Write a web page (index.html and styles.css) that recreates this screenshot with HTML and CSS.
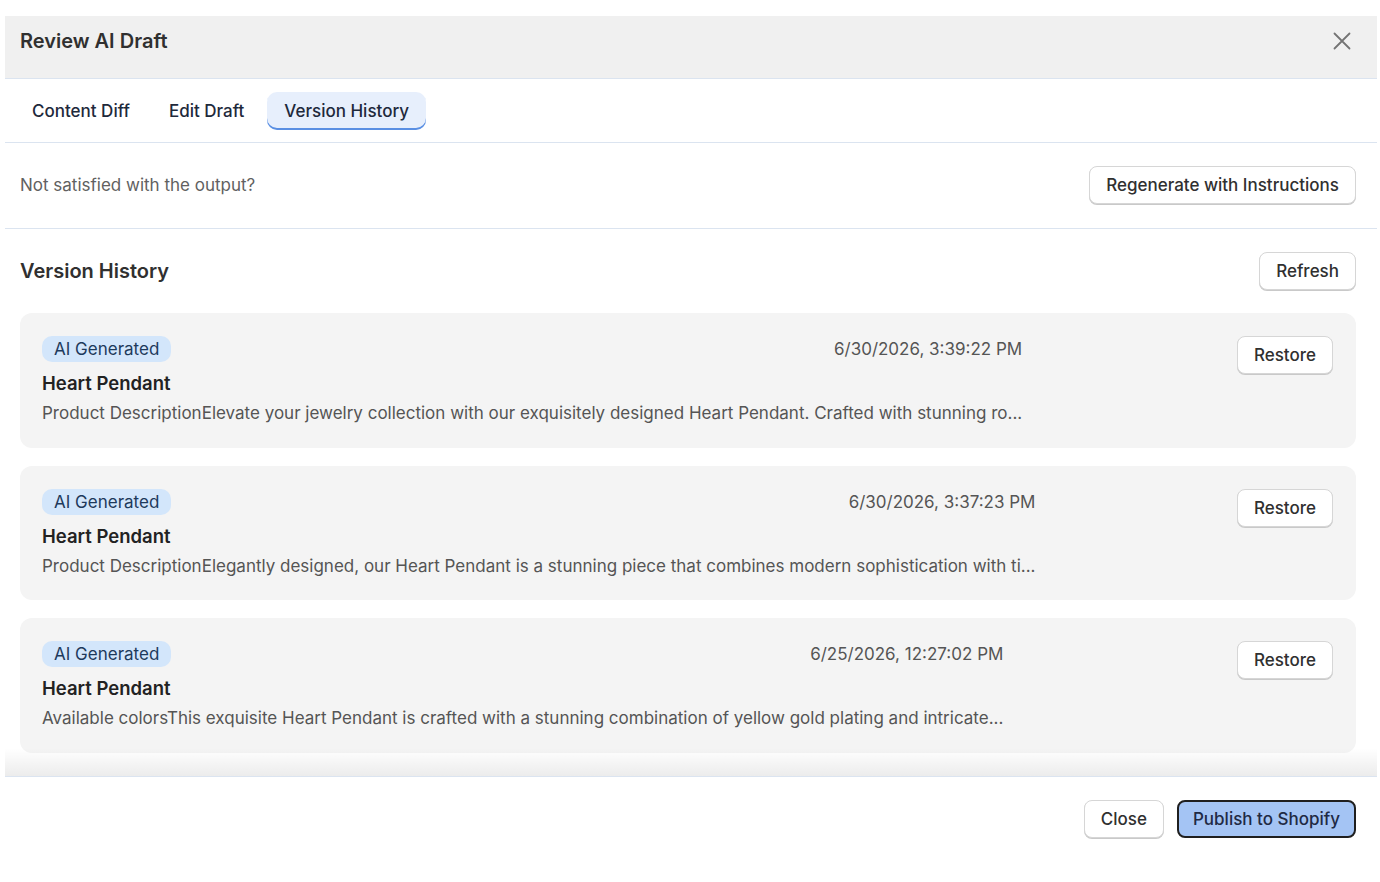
FILE: index.html
```html
<!DOCTYPE html>
<html lang="en">
<head>
<meta charset="utf-8">
<title>Review AI Draft</title>
<link rel="stylesheet" href="styles.css">
</head>
<body>
<div class="modal">
  <header class="modal-header">
    <h1 class="modal-title">Review AI Draft</h1>
    <button class="icon-btn" aria-label="Close">
      <svg width="20" height="20" viewBox="0 0 20 20"><path d="M2.5 2.5 L17.5 17.5 M17.5 2.5 L2.5 17.5" stroke="#747474" stroke-width="1.8" stroke-linecap="round" fill="none"/></svg>
    </button>
  </header>
  <nav class="tabs">
    <button class="tab">Content Diff</button>
    <button class="tab">Edit Draft</button>
    <button class="tab tab-active">Version History</button>
  </nav>
  <div class="regen-row">
    <span class="muted">Not satisfied with the output?</span>
    <button class="btn">Regenerate with Instructions</button>
  </div>
  <section class="history">
    <div class="history-head">
      <h2 class="section-title">Version History</h2>
      <button class="btn">Refresh</button>
    </div>
    <div class="cards">
      <article class="card">
        <div class="card-body">
          <div class="card-top">
            <span class="badge">AI Generated</span>
            <span class="stamp">6/30/2026, 3:39:22 PM</span>
          </div>
          <div class="card-title">Heart Pendant</div>
          <div class="card-desc">Product DescriptionElevate your jewelry collection with our exquisitely designed Heart Pendant. Crafted with stunning ro...</div>
        </div>
        <button class="btn">Restore</button>
      </article>
      <article class="card">
        <div class="card-body">
          <div class="card-top">
            <span class="badge">AI Generated</span>
            <span class="stamp">6/30/2026, 3:37:23 PM</span>
          </div>
          <div class="card-title">Heart Pendant</div>
          <div class="card-desc">Product DescriptionElegantly designed, our Heart Pendant is a stunning piece that combines modern sophistication with ti...</div>
        </div>
        <button class="btn">Restore</button>
      </article>
      <article class="card">
        <div class="card-body">
          <div class="card-top">
            <span class="badge">AI Generated</span>
            <span class="stamp">6/25/2026, 12:27:02 PM</span>
          </div>
          <div class="card-title">Heart Pendant</div>
          <div class="card-desc">Available colorsThis exquisite Heart Pendant is crafted with a stunning combination of yellow gold plating and intricate...</div>
        </div>
        <button class="btn">Restore</button>
      </article>
    </div>
  </section>
  <footer class="modal-footer">
    <button class="btn">Close</button>
    <button class="btn btn-primary">Publish to Shopify</button>
  </footer>
</div>
</body>
</html>
```
FILE: styles.css
```css
* { box-sizing: border-box; }
html, body { margin: 0; padding: 0; background: #ffffff; }
body {
  font-family: Inter, "Noto Sans", "Liberation Sans", sans-serif;
  color: #303030;
  padding: 16px 3px 0 5px;
}
button { font-family: inherit; }

.modal {
  background: #fff;
  display: flex;
  flex-direction: column;
}

.modal-header {
  height: 63px;
  background: #f0f0f0;
  border-bottom: 1px solid #dbe4f0;
  display: flex;
  align-items: flex-start;
  justify-content: space-between;
  padding: 13px 25px 0 15px;
}
.modal-title {
  margin: 0;
  font-size: 20px;
  line-height: 24px;
  font-weight: 600;
  color: #303030;
}
.icon-btn {
  background: none;
  border: 0;
  padding: 0;
  margin-top: 2px;
  width: 20px;
  height: 20px;
  display: flex;
  cursor: pointer;
}

.tabs {
  display: flex;
  gap: 7px;
  padding: 13px 11px 12px 11px;
  border-bottom: 1px solid #dbe4f0;
}
.tab {
  border: 0;
  background: none;
  font-size: 17px;
  font-weight: 500;
  color: #1e293b;
  height: 38px;
  padding: 0 16px;
  border-radius: 10px;
  cursor: pointer;
}
.tab-active {
  background: #e7effc;
  box-shadow: inset 0 -2px 0 #5a8fe3;
  padding: 0 17px;
}

.regen-row {
  height: 86px;
  display: flex;
  align-items: center;
  justify-content: space-between;
  padding: 0 21px 1px 15px;
  border-bottom: 1px solid #dbe4f0;
}
.muted { font-size: 17px; color: #616161; }

.btn {
  height: 38px;
  padding: 0 16px;
  font-size: 17px;
  font-weight: 500;
  color: #303030;
  background: #fff;
  border: 1px solid #d6d6d6;
  border-radius: 8px;
  box-shadow: 0 1px 0 #c9c9c9;
  cursor: pointer;
  white-space: nowrap;
}

.history {
  padding: 23px 21px 23.5px 15px;
}
.history-head {
  display: flex;
  align-items: center;
  justify-content: space-between;
  margin-bottom: 23px;
}
.section-title {
  margin: 0;
  font-size: 20px;
  font-weight: 600;
  color: #303030;
}

.cards {
  display: flex;
  flex-direction: column;
  gap: 18px;
}
.card {
  background: #f4f4f4;
  border-radius: 12px;
  padding: 23px 23px 22.5px 22px;
  display: flex;
  justify-content: space-between;
  align-items: flex-start;
}
.card-body {
  display: flex;
  flex-direction: column;
}
.card-top {
  display: flex;
  justify-content: space-between;
  align-items: center;
}
.badge {
  display: inline-flex;
  align-items: center;
  height: 26px;
  padding: 0 12px;
  border-radius: 10px;
  background: #d3e6fb;
  color: #1e3a5c;
  font-size: 17px;
}
.stamp { font-size: 17px; color: #555; }
.card-title {
  margin-top: 8px;
  font-size: 18.5px;
  font-weight: 600;
  color: #222;
  line-height: 26px;
}
.card-desc {
  margin-top: 5px;
  font-size: 17px;
  color: #555;
  line-height: 24px;
  white-space: nowrap;
}

.modal-footer {
  position: relative;
  border-top: 1px solid #dbe4f0;
  display: flex;
  justify-content: flex-end;
  gap: 13px;
  padding: 23px 21px 23px 15px;
}
.modal-footer::before {
  content: "";
  position: absolute;
  left: 0;
  right: 0;
  bottom: 100%;
  height: 28px;
  margin-bottom: 1px;
  background: linear-gradient(to bottom, rgba(0,0,0,0), rgba(0,0,0,0.075));
  pointer-events: none;
}
.btn-primary {
  background: #a4c4f4;
  border: 2px solid #1f1f1f;
  color: #1f2a44;
  box-shadow: none;
  padding: 0 14px;
}
```
